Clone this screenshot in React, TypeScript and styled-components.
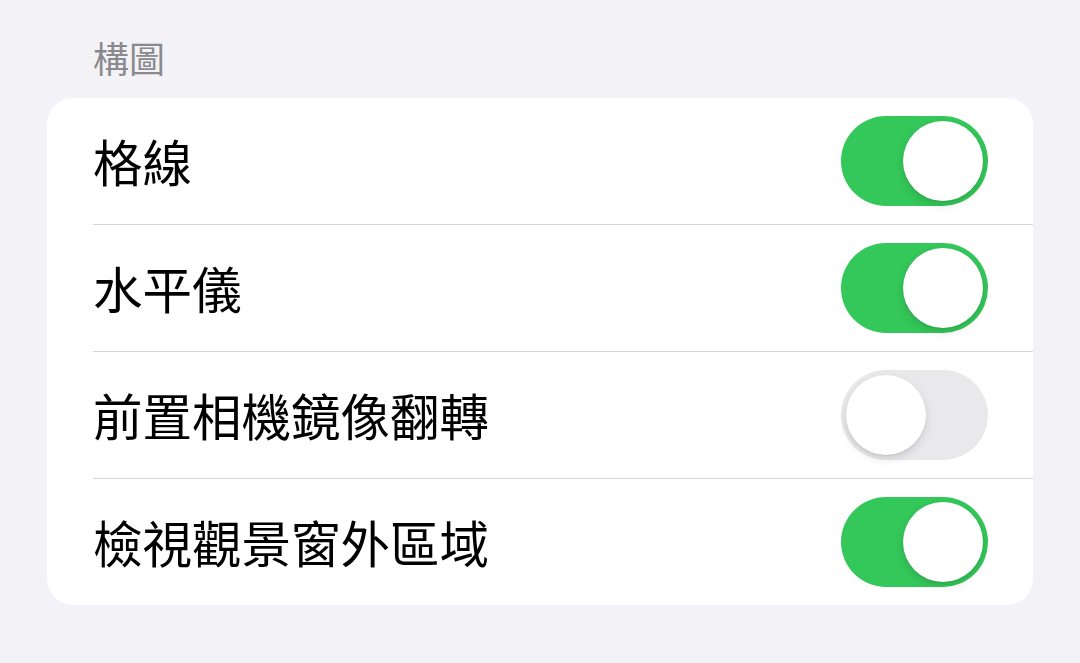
import React from "react";
import styled, { createGlobalStyle } from "styled-components";

const GlobalStyle = createGlobalStyle`
  html, body {
    margin: 0;
    padding: 0;
    background: #f2f2f7;
  }
  body {
    font-family: "Noto Sans CJK TC", "Noto Sans", sans-serif;
  }
`;

const Page = styled.div`
  width: 1080px;
  height: 663px;
  background: #f2f2f7;
  padding-top: 35px;
  box-sizing: border-box;
`;

const SectionHeader = styled.div`
  padding-left: 93px;
  font-size: 36px;
  line-height: 44px;
  color: #8a8a8e;
  margin-bottom: 19px;
`;

const Card = styled.div`
  margin-left: 47px;
  width: 986px;
  background: #ffffff;
  border-radius: 26px;
  overflow: hidden;
`;

const Row = styled.div<{ last?: boolean }>`
  display: flex;
  align-items: center;
  justify-content: space-between;
  margin-left: 46px;
  padding-right: 45px;
  height: 126px;
  border-bottom: ${(props) => (props.last ? "none" : "1.5px solid #d6d6da")};
`;

const Label = styled.span`
  font-size: 49.5px;
  line-height: 60px;
  color: #000000;
`;

const Track = styled.div<{ on: boolean }>`
  position: relative;
  width: 147px;
  height: 90px;
  border-radius: 45px;
  background: ${(props) => (props.on ? "#34c759" : "#e9e9eb")};
  flex-shrink: 0;
`;

const Knob = styled.div<{ on: boolean }>`
  position: absolute;
  top: 5px;
  left: ${(props) => (props.on ? "62px" : "5px")};
  width: 80px;
  height: 80px;
  border-radius: 50%;
  background: #ffffff;
  box-shadow: 0 4px 10px rgba(0, 0, 0, 0.12), 0 1px 2px rgba(0, 0, 0, 0.08);
`;

const Toggle = ({ on }: { on: boolean }) => (
  <Track on={on}>
    <Knob on={on} />
  </Track>
);

const rows = [
  { label: "格線", on: true },
  { label: "水平儀", on: true },
  { label: "前置相機鏡像翻轉", on: false },
  { label: "檢視觀景窗外區域", on: true },
];

export default function App() {
  return (
    <Page>
      <GlobalStyle />
      <SectionHeader>構圖</SectionHeader>
      <Card>
        {rows.map((r, i) => (
          <Row key={r.label} last={i === rows.length - 1}>
            <Label>{r.label}</Label>
            <Toggle on={r.on} />
          </Row>
        ))}
      </Card>
    </Page>
  );
}
